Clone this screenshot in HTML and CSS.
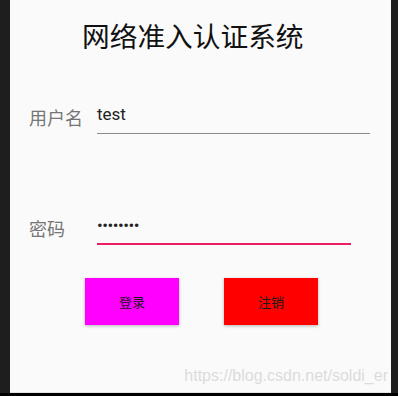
FILE: index.html
```html
<!DOCTYPE html>
<html lang="zh-CN">
<head>
    <meta charset="UTF-8">
    <meta name="viewport" content="width=device-width, initial-scale=1.0">
    <title>网络准入认证系统</title>
    <link rel="stylesheet" href="styles.css">
</head>
<body>
    <div class="device">
        <div class="screen">
            <h1 class="title">网络准入认证系统</h1>

            <div class="form-row row-user">
                <span class="label">用户名</span>
                <div class="field field-user">
                    <span class="field-text">test</span>
                </div>
            </div>

            <div class="form-row row-pass">
                <span class="label">密码</span>
                <div class="field field-pass focused">
                    <span class="field-text dots">••••••••</span>
                </div>
            </div>

            <div class="actions">
                <button class="btn btn-login">登录</button>
                <button class="btn btn-cancel">注销</button>
            </div>

            <div class="watermark">https://blog.csdn.net/soldi_er</div>
        </div>
    </div>
</body>
</html>
```

FILE: styles.css
```css
* {
    margin: 0;
    padding: 0;
    box-sizing: border-box;
}

body {
    background: #000;
    width: 398px;
    height: 396px;
    overflow: hidden;
    font-family: "Noto Sans CJK SC", "Noto Sans", sans-serif;
}

.device {
    background: #1e1e1e;
    height: 393px;
    padding: 0 7px 0 10px;
}

.screen {
    position: relative;
    background: #fafafa;
    height: 393px;
    border-bottom: 1px solid #e4e4e4;
}

.title {
    font-size: 27.7px;
    font-weight: normal;
    line-height: 1;
    color: #111;
    padding-top: 22px;
    padding-left: 72px;
}

.form-row {
    display: flex;
    align-items: center;
    padding-left: 19px;
}

.row-user {
    margin-top: 50px;
}

.row-pass {
    margin-top: 77px;
}

.label {
    width: 68px;
    font-size: 18px;
    line-height: 1;
    color: #757575;
}

.field {
    height: 34px;
    display: flex;
    align-items: center;
    border-bottom: 1px solid #8a8a8a;
}

.field-user {
    width: 273px;
}

.field-pass {
    width: 254px;
}

.field.focused {
    border-bottom: 2px solid #e91e63;
}

.field-text {
    font-family: Roboto, "Noto Sans", sans-serif;
    font-size: 17px;
    color: #222;
    margin-top: -4px;
}

.dots {
    letter-spacing: -0.5px;
}

.actions {
    display: flex;
    gap: 45px;
    padding-left: 75px;
    margin-top: 33px;
}

.btn {
    width: 94px;
    height: 47px;
    border: none;
    font-family: "Noto Sans CJK SC", sans-serif;
    font-size: 13px;
    color: #1a1a1a;
    box-shadow: 0 1px 3px rgba(0,0,0,0.28);
}

.btn-login {
    background: #ff00ff;
}

.btn-cancel {
    background: #ff0000;
}

.watermark {
    position: absolute;
    right: 3px;
    bottom: 7px;
    font-family: "Liberation Sans", Arial, sans-serif;
    font-size: 16px;
    color: #dcdcdc;
}
```
